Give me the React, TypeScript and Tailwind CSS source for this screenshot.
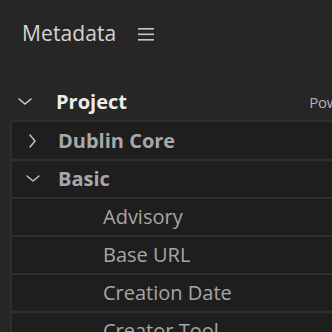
import React from 'react';

const font = { fontFamily: '"Open Sans", "Noto Sans", sans-serif' };

const Chevron: React.FC<{ open: boolean; className?: string }> = ({ open, className }) => (
  <svg width="16" height="16" viewBox="0 0 16 16" className={className} fill="none">
    {open ? (
      <path d="M2 5l6 5 6-5" stroke="currentColor" strokeWidth="1.6" strokeLinecap="round" strokeLinejoin="round" />
    ) : (
      <path d="M5 2l5 6-5 6" stroke="currentColor" strokeWidth="1.6" strokeLinecap="round" strokeLinejoin="round" />
    )}
  </svg>
);

const fields = ['Advisory', 'Base URL', 'Creation Date', 'Creator Tool'];

const App: React.FC = () => {
  return (
    <div className="w-[332px] h-[332px] overflow-hidden bg-[#262626]" style={font}>
      <div className="h-[66px] flex items-center pl-[22px]">
        <span className="text-[21px] text-[#d4d4d4] leading-none tracking-[0.1px]">Metadata</span>
        <svg width="16" height="14" viewBox="0 0 16 14" className="ml-[22px] mt-[2px]">
          <rect x="0" y="1" width="16" height="1.6" fill="#c8c8c8" />
          <rect x="0" y="6.5" width="16" height="1.6" fill="#c8c8c8" />
          <rect x="0" y="12" width="16" height="1.6" fill="#c8c8c8" />
        </svg>
      </div>

      <div className="h-[54px] flex items-center pt-[18px] pl-[17px] whitespace-nowrap">
        <Chevron open className="text-[#cfcfcf] w-[16px] h-[16px]" />
        <span className="ml-[23px] text-[20px] font-bold text-[#ececec]">Project</span>
        <span className="ml-auto mr-[-20px] text-[15px] tracking-[-0.3px] text-[#b4b4b4]">Power</span>
      </div>

      <div className="ml-[10px] w-[340px] bg-[#1e1e1e] border-l-2 border-t-2 border-[#2f2f2f] rounded-tl-[3px]">
        <div className="h-[39px] flex items-center pl-[13px] border-b-2 border-[#2f2f2f]">
          <Chevron open={false} className="text-[#bdbdbd]" />
          <span className="ml-[17px] text-[20px] font-bold text-[#a8a8a8]">Dublin Core</span>
        </div>
        <div className="h-[38px] flex items-center pl-[13px] border-b-2 border-[#2f2f2f]">
          <Chevron open className="text-[#bdbdbd]" />
          <span className="ml-[17px] text-[20px] font-bold text-[#a8a8a8]">Basic</span>
        </div>
        {fields.map((f) => (
          <div key={f} className="h-[38px] flex items-center pl-[91px] border-b-2 border-[#2f2f2f]">
            <span className="text-[20px] text-[#a6a6a6]">{f}</span>
          </div>
        ))}
      </div>
    </div>
  );
};

export default App;
